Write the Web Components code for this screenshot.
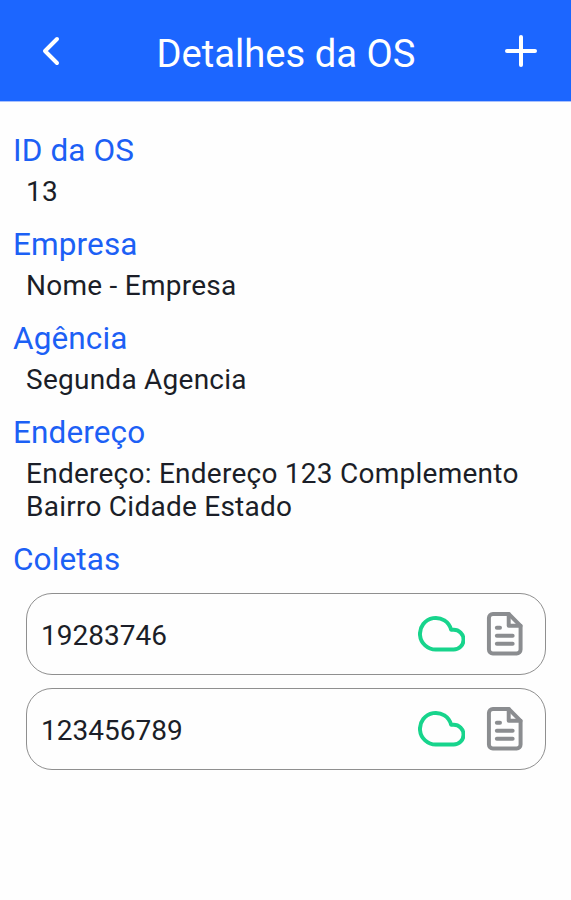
<!DOCTYPE html>
<html lang="pt-BR">
<head>
<meta charset="UTF-8">
<meta name="viewport" content="width=device-width, initial-scale=1.0">
<title>Detalhes da OS</title>
<style>
    body{
        margin: 0;
        background-color: #fefefe;
        color: #1b1e28;
        font-family: Roboto, sans-serif;
    }
</style>
</head>
<body>
    <os-header>Detalhes da OS</os-header>
    <os-details>
        <os-field label="ID da OS">13</os-field>
        <os-field label="Empresa">Nome - Empresa</os-field>
        <os-field label="Agência">Segunda Agencia</os-field>
        <os-field label="Endereço">Endereço: Endereço 123 Complemento Bairro Cidade Estado</os-field>
        <os-field label="Coletas" class="list">
            <coleta-item>19283746</coleta-item>
            <coleta-item>123456789</coleta-item>
        </os-field>
    </os-details>

<script>
const icons = {
    back: '<polyline points="15 18 9 12 15 6"/>',
    plus: '<line x1="12" y1="5" x2="12" y2="19"/><line x1="5" y1="12" x2="19" y2="12"/>',
    cloud: '<path d="M18 10h-1.26A8 8 0 1 0 9 20h9a5 5 0 0 0 0-10z"/>',
    file: `<path d="M14 2H6a2 2 0 0 0-2 2v16a2 2 0 0 0 2 2h12a2 2 0 0 0 2-2V8z"/>
        <polyline points="14 2 14 8 20 8"/>
        <line x1="16" y1="13" x2="8" y2="13"/>
        <line x1="16" y1="17" x2="8" y2="17"/>
        <line x1="9.6" y1="9" x2="8" y2="9"/>`
}

class osIcon extends HTMLElement {
    constructor(){
        super();
        this.attachShadow({mode:'open'});
    }
    connectedCallback(){
        this.shadowRoot.innerHTML = `
            <style>
                :host{
                    display: block;
                    flex: none;
                    width: var(--icon-size, 47.5px);
                    height: var(--icon-size, 47.5px);
                }
                svg{
                    display: block;
                    width: 100%;
                    height: 100%;
                    fill: none;
                    stroke: currentColor;
                    stroke-width: 2;
                    stroke-linecap: round;
                    stroke-linejoin: round;
                }
            </style>
            <svg viewBox="0 0 24 24">${icons[this.getAttribute('name')]}</svg>
        `;
    }
}
customElements.define("os-icon", osIcon)

class osHeader extends HTMLElement {
    constructor(){
        super();
        this.attachShadow({mode:'open'});
    }
    connectedCallback(){
        this.shadowRoot.innerHTML = `
            <style>
                :host{
                    --icon-size: 48px;
                    display: flex;
                    justify-content: space-between;
                    align-items: center;
                    height: 100px;
                    padding: 1px 26px 0 27px;
                    border-bottom: 1px solid #a9c1fd;
                    background-color: #1c66ff;
                    color: #fff;
                }
                h1{
                    margin: 0;
                    padding-top: 6px;
                    font-size: 38.2px;
                    font-weight: 400;
                    line-height: 46px;
                }
            </style>
            <os-icon name="back"></os-icon>
            <h1><slot></slot></h1>
            <os-icon name="plus"></os-icon>
        `;
    }
}
customElements.define("os-header", osHeader)

class osDetails extends HTMLElement {
    constructor(){
        super();
        this.attachShadow({mode:'open'});
    }
    connectedCallback(){
        this.shadowRoot.innerHTML = `
            <style>
                :host{
                    display: flex;
                    flex-direction: column;
                    gap: 16px;
                    padding: 28px 25px 0 13px;
                }
            </style>
            <slot></slot>
        `;
    }
}
customElements.define("os-details", osDetails)

class osField extends HTMLElement {
    constructor(){
        super();
        this.attachShadow({mode:'open'});
    }
    connectedCallback(){
        this.shadowRoot.innerHTML = `
            <style>
                :host{
                    display: block;
                }
                .label{
                    padding-bottom: 4px;
                    color: #1c60f5;
                    font-size: 31.5px;
                    letter-spacing: .12px;
                    line-height: 41px;
                }
                .value{
                    padding-left: 13px;
                    font-size: 28px;
                    letter-spacing: .25px;
                    line-height: 33px;
                }
                :host(.list) .value{
                    display: flex;
                    flex-direction: column;
                    gap: 13px;
                    padding-top: 9px;
                    letter-spacing: 0;
                }
            </style>
            <div class="label">${this.getAttribute('label')}</div>
            <div class="value"><slot></slot></div>
        `;
    }
}
customElements.define("os-field", osField)

class coletaItem extends HTMLElement {
    constructor(){
        super();
        this.attachShadow({mode:'open'});
    }
    connectedCallback(){
        this.shadowRoot.innerHTML = `
            <style>
                :host{
                    display: flex;
                    align-items: center;
                    gap: 16px;
                    height: 82px;
                    padding: 0 16.5px 0 14px;
                    box-sizing: border-box;
                    border: 1px solid #8f8f8f;
                    border-radius: 26px;
                }
                .code{
                    flex: 1;
                    padding-top: 3px;
                }
                .cloud{
                    color: #17d48c;
                }
                .file{
                    color: #8b8d90;
                }
            </style>
            <span class="code"><slot></slot></span>
            <os-icon class="cloud" name="cloud"></os-icon>
            <os-icon class="file" name="file"></os-icon>
        `;
    }
}
customElements.define("coleta-item", coletaItem)
</script>
</body>
</html>
